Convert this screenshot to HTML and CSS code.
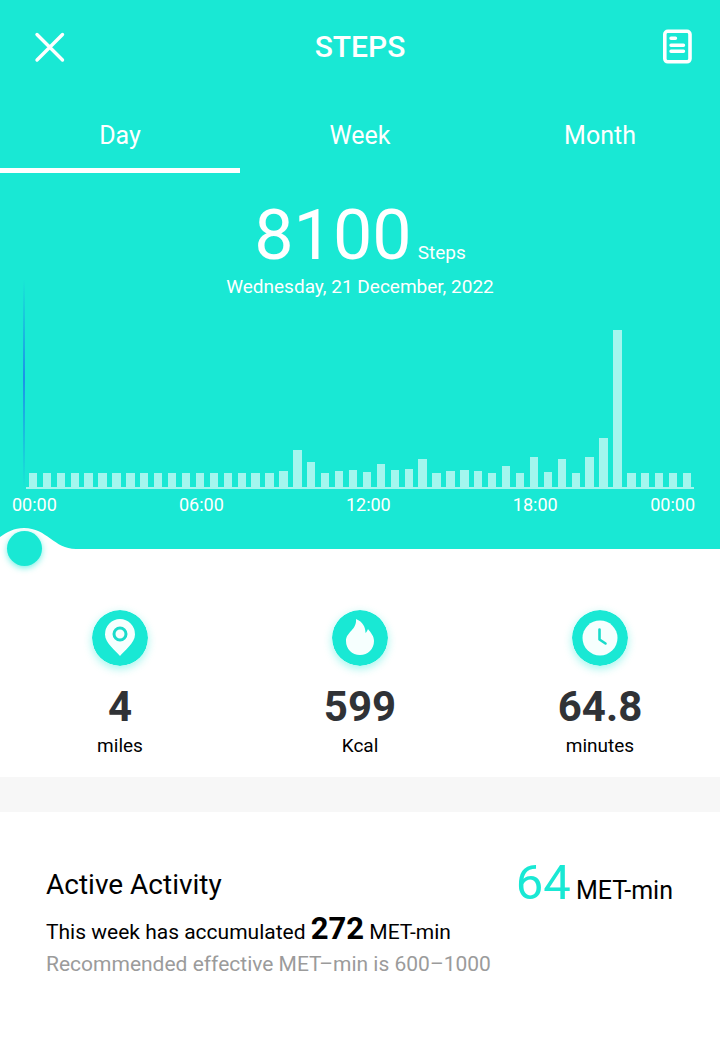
FILE: index.html
```html
<!DOCTYPE html>
<html lang="en">
<head>
<meta charset="utf-8">
<meta name="viewport" content="width=device-width, initial-scale=1">
<title>Steps</title>
<link rel="stylesheet" href="styles.css">
</head>
<body>
<section class="hero">
  <header class="topbar">
    <button class="icon-button" type="button" aria-label="Close">
      <svg width="32" height="32" viewBox="0 0 32 32" fill="none" stroke="#fff" stroke-width="3.4" stroke-linecap="round"><path d="M3 3.500 28.500 29M28.500 3.500 3 29"/></svg>
    </button>
    <h1 class="title">STEPS</h1>
    <button class="icon-button" type="button" aria-label="Records">
      <svg width="30" height="36" viewBox="0 0 30 36" fill="none" stroke="#fff" stroke-linecap="round"><rect x="2.8" y="2.3" width="25.200" height="30.500" rx="3" stroke-width="3.600"/><path d="M9 9.300h4.500M9 16.200h12.500M9 22.300h12.500" stroke-width="3.400"/></svg>
    </button>
  </header>
  <nav class="tabs" aria-label="Period">
    <button class="tab tab-active" type="button">Day</button>
    <button class="tab" type="button">Week</button>
    <button class="tab" type="button">Month</button>
  </nav>
  <p class="total"><span class="total-value">8100</span><span class="total-unit">Steps</span></p>
  <p class="date">Wednesday, 21 December, 2022</p>
  <div class="chart">
    <div class="cursor"></div>
    <div class="bars" id="bars"></div>
  </div>
  <div class="hours">
    <span>00:00</span><span>06:00</span><span>12:00</span>
    <div class="hours-end"><span>18:00</span><span>00:00</span></div>
  </div>
  <div class="scrubber">
    <svg class="wave" width="80" height="21" viewBox="0 0 80 21"><path d="M0 9C7 4 14 0 24 0C47 0 54 21 76 21H0Z" fill="#fff"/></svg>
    <input class="range" type="range" min="0" max="47" value="0" aria-label="Time of day">
  </div>
</section>
<section class="stats">
  <div class="stat">
    <svg class="stat-icon" viewBox="0 0 56 56"><circle cx="28" cy="28" r="28" fill="#19e8d4"/><path d="M28 46C24 41 13 33 13 24.500A15 15.500 0 0 1 43 24.500C43 33 32 41 28 46Z" fill="#f6fffe"/><circle cx="28" cy="24" r="6" fill="none" stroke="#19dccb" stroke-width="3"/></svg>
    <strong class="stat-value">4</strong><span class="stat-label">miles</span>
  </div>
  <div class="stat">
    <svg class="stat-icon" viewBox="0 0 56 56"><circle cx="28" cy="28" r="28" fill="#19e8d4"/><path d="M24 9C31 12 33.500 17 33.500 23C34.500 22 35.500 20.500 36 19C39 23 42 26 42 31C42 39 36 45 28 45C20 45 14 39 14 31C14 22 25 20 24 9Z" fill="#f6fffe"/></svg>
    <strong class="stat-value">599</strong><span class="stat-label">Kcal</span>
  </div>
  <div class="stat">
    <svg class="stat-icon" viewBox="0 0 56 56"><circle cx="28" cy="28" r="28" fill="#19e8d4"/><circle cx="28" cy="28" r="17.500" fill="#f6fffe"/><path d="M27.500 19.500V29.500L33.500 33.500" fill="none" stroke="#19dccb" stroke-width="2.600" stroke-linecap="round" stroke-linejoin="round"/></svg>
    <strong class="stat-value">64.8</strong><span class="stat-label">minutes</span>
  </div>
</section>
<section class="activity">
  <div class="activity-head">
    <h2 class="activity-title">Active Activity</h2>
    <p class="met"><span class="met-value">64</span><span class="met-unit">MET-min</span></p>
  </div>
  <p class="week">This week has accumulated <strong class="week-value">272</strong> MET-min</p>
  <p class="hint">Recommended effective MET–min is 600–1000</p>
</section>
<script src="chart.js"></script>
</body>
</html>
```
FILE: styles.css
```css
* { box-sizing: border-box; }
body { margin: 0; background: #fff; color: #000; font-family: Roboto, "Liberation Sans", sans-serif; }
h1, h2, p { margin: 0; font-weight: 400; }
button { border: 0; padding: 0; background: none; color: inherit; font: inherit; cursor: pointer; }
svg { display: block; }

.hero { background: #19e8d4; color: #fff; }
.topbar { display: flex; align-items: center; justify-content: space-between; height: 94px; padding: 0 28px; }
.icon-button { display: flex; justify-content: flex-end; width: 38px; }
.title { font-size: 30px; line-height: 36px; font-weight: 500; }
.tabs { display: grid; grid-template-columns: repeat(3, 1fr); }
.tab { height: 79px; padding-top: 10px; border-bottom: 5px solid transparent; font-size: 25px; line-height: 30px; }
.tab-active { border-bottom-color: #fff; }
.total { display: flex; align-items: baseline; justify-content: center; gap: 6px; padding-top: 21px; line-height: 82px; }
.total-value { font-size: 70px; }
.total-unit { font-size: 19px; line-height: 24px; }
.date { margin-top: -1px; text-align: center; font-size: 19px; line-height: 24px; }
.chart { position: relative; padding: 0 26px; }
.cursor { position: absolute; left: 23px; top: -20px; bottom: 0; width: 2px; background: linear-gradient(transparent, #1c93e8 47%, transparent); }
.bars { display: grid; grid-template-columns: repeat(48, 1fr); align-items: end; justify-items: center; height: 190px; border-bottom: 2px solid #a3f6ee; }
.bar { width: 60%; background: #a3f6ee; }
.hours { display: grid; grid-template-columns: 11fr 11fr 11fr 12fr; padding: 4px 25px 0 12px; font-size: 18px; line-height: 24px; }
.hours-end { display: flex; justify-content: space-between; }
.scrubber { position: relative; padding-top: 11px; }
.range { position: absolute; left: 7px; right: 7px; bottom: -17px; height: 35px; margin: 0; appearance: none; background: none; }
.range::-webkit-slider-thumb { appearance: none; width: 35px; height: 35px; border: 0; border-radius: 50%; background: #19e8d4; box-shadow: 0 2px 6px #19e8d499; }

.stats { display: grid; grid-template-columns: repeat(3, 1fr); padding: 61px 0 17px; border-bottom: 35px solid #f7f7f7; }
.stat { display: flex; flex-direction: column; align-items: center; }
.stat-icon { width: 56px; height: 56px; border-radius: 50%; box-shadow: 0 3px 8px #19e8d466; }
.stat-value { margin-top: 16px; color: #303236; font-size: 42px; line-height: 50px; font-weight: 700; }
.stat-label { font-size: 19px; line-height: 28px; }

.activity { padding: 41px 47px 40px 46px; }
.activity-head { display: flex; align-items: flex-start; justify-content: space-between; }
.activity-title { padding-top: 14px; font-size: 28px; line-height: 36px; }
.met { display: flex; align-items: baseline; gap: 5px; line-height: 60px; }
.met-value { color: #19e8d4; font-size: 49px; }
.met-unit { font-size: 25px; line-height: 30px; }
.week { font-size: 21px; line-height: 32px; }
.week-value { font-size: 31px; font-weight: 700; }
.hint { color: #9b9b9b; font-size: 21px; line-height: 32px; }
```
FILE: chart.js
```js
const heights = [
  ...Array(18).fill(14), 16, 37, 25, 14, 16, 17, 15, 23, 17, 18, 28, 14, 16, 17, 16,
  14, 21, 14, 30, 15, 28, 14, 30, 49, 157, 14, 14, 14, 14, 14
];
const bars = document.getElementById("bars");
for (const height of heights) {
  const bar = document.createElement("div");
  bar.className = "bar";
  bar.style.height = height + "px";
  bars.append(bar);
}
```
